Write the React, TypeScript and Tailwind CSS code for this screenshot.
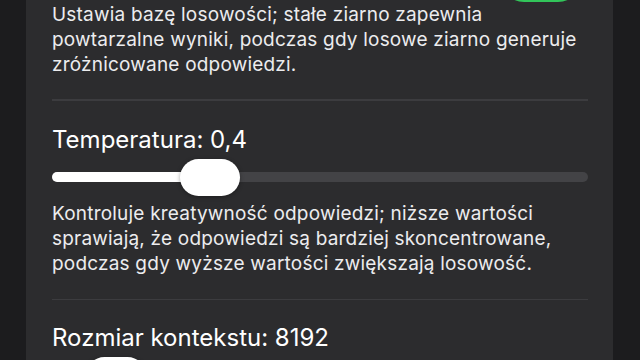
const Divider = () => <div className="h-[1.5px] bg-[#3c3c3f]" />;

const Slider = ({ fill, thumb }: { fill: number; thumb: number }) => (
  <div className="relative h-[37px] flex items-center">
    <div className="h-[10px] w-full rounded-full bg-[#434346]" />
    <div
      className="absolute left-0 top-1/2 h-[10px] -translate-y-1/2 rounded-full bg-white"
      style={{ width: fill }}
    />
    <div
      className="absolute top-0 h-[37px] w-[60px] rounded-full bg-white shadow-[0_1px_4px_rgba(0,0,0,0.35)]"
      style={{ left: thumb }}
    />
  </div>
);

export default function App() {
  return (
    <div
      className="h-[360px] w-[640px] overflow-hidden bg-[#1c1c1e] text-[#ececee]"
      style={{ fontFamily: 'Inter, "Noto Sans", sans-serif' }}
    >
      <div className="ml-[26px] w-[587px] bg-[#2c2c2e] pl-[26px] pr-[25px]">
        <div className="-mt-[48px]">
          <div className="flex h-[50px] items-center justify-end">
            <div className="mr-[5px] flex h-[50px] w-[84px] items-center justify-end rounded-full bg-[#32c55a] pr-[3px]">
              <div className="h-[44px] w-[44px] rounded-full bg-white" />
            </div>
          </div>
          <p className="text-[19px] leading-[25px] tracking-[0.2px]">
            Ustawia bazę losowości; stałe ziarno zapewnia
            <br />
            powtarzalne wyniki, podczas gdy losowe ziarno generuje
            <br />
            zróżnicowane odpowiedzi.
          </p>
          <div className="pt-[22px]">
            <Divider />
          </div>
        </div>

        <div className="pt-[24px]">
          <h3 className="text-[24px] leading-[30px] text-white">Temperatura: 0,4</h3>
          <div className="mt-[4px]">
            <Slider fill={170} thumb={128} />
          </div>
          <p className="mt-[5px] text-[19px] leading-[25px] tracking-[0.2px]">
            Kontroluje kreatywność odpowiedzi; niższe wartości
            <br />
            sprawiają, że odpowiedzi są bardziej skoncentrowane,
            <br />
            podczas gdy wyższe wartości zwiększają losowość.
          </p>
          <div className="pt-[23px]">
            <Divider />
          </div>
        </div>

        <div className="pt-[23px]">
          <h3 className="text-[24px] leading-[30px] text-white">Rozmiar kontekstu: 8192</h3>
          <div className="mt-[4px]">
            <Slider fill={70} thumb={34} />
          </div>
        </div>
      </div>
    </div>
  );
}
